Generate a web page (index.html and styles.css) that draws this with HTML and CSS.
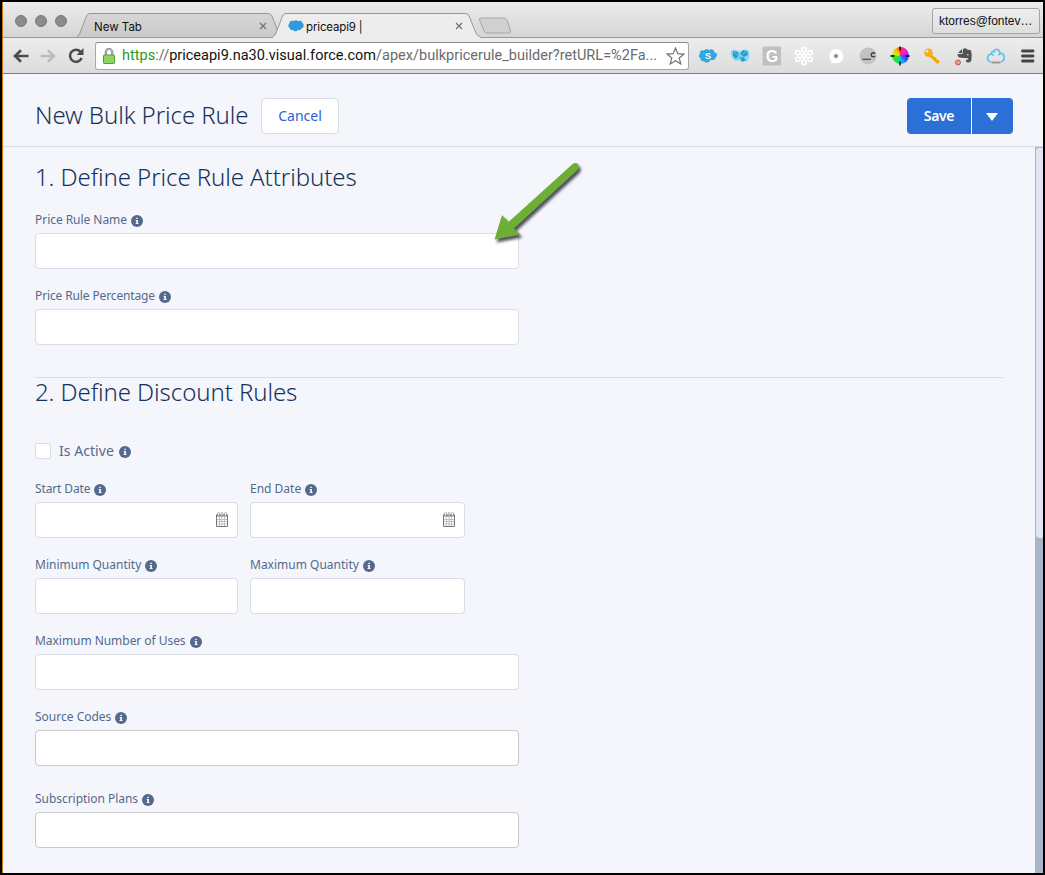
FILE: index.html
```html
<!DOCTYPE html>
<html lang="en">
<head>
<meta charset="utf-8">
<title>priceapi9</title>
<link rel="stylesheet" href="styles.css">
</head>
<body>
<svg class="defs" width="0" height="0">
  <symbol id="info" viewBox="0 0 12 12"><circle cx="6" cy="6" r="6" fill="#54698d"/><path d="M5.300 2.700h1.500v1.400H5.300zM4.700 5h2.200v3.200h.7v.9H4.500v-.9h.8V5.900h-.6z" fill="#fff"/></symbol>
  <symbol id="cal" viewBox="0 0 12 15"><path d="M.5 3.500v11h11v-11" fill="#fff" stroke="#77777c"/><path d="M0 2.500h12v2H0z" fill="#77777c"/><path d="M3.500 5v9M6 5v9M8.500 5v9M1 7.500h10M1 9.500h10M1 12h10" stroke="#b5b5b9" stroke-width=".8"/><path d="M2.500 3.500v-3M6 3.500v-3M9.500 3.500v-3" stroke="#99999d" stroke-width="2.400"/><path d="M2.500 3.500V1M6 3.500V1M9.500 3.500V1" stroke="#fff" stroke-width=".9"/></symbol>
</svg>
<div class="window">
  <div class="tabstrip">
    <div class="lights"><i></i><i></i><i></i></div>
    <div class="tab tab-back">
      <svg class="tab-shape" width="204" height="24" viewBox="0 0 204 24"><defs><linearGradient id="tg" x2="0" y2="1"><stop stop-color="#d6d6d6"/><stop offset="1" stop-color="#cacaca"/></linearGradient></defs><path d="M0 23.500Q2 23 3 20L9.500 3Q10.500.5 13 .5H191Q194 .5 195 3L201.500 20Q202.500 23 204 23.500" fill="url(#tg)" stroke="#979797"/></svg>
      <span class="tab-title">New Tab</span>
      <svg class="tab-x" width="8" height="8"><path d="M1 1l6 6M7 1L1 7" stroke="#737373" stroke-width="1.300"/></svg>
    </div>
    <div class="tab tab-front">
      <svg class="tab-shape" width="210" height="25" viewBox="0 0 210 25"><path d="M0 23.500Q2 23 3 20L9.500 3Q10.500.5 13 .5H192Q195 .5 196 3L203 20Q204 23 207 23.500V25H0z" fill="#ededed"/><path d="M0 23.500Q2 23 3 20L9.500 3Q10.500.5 13 .5H192Q195 .5 196 3L203 20Q204 23 207 23.500" fill="none" stroke="#979797"/></svg>
      <svg class="fav" width="16" height="12" viewBox="0 0 16 12"><path d="M1.200 4C1 1.500 3.500.2 5.500 1.200 6.500-.2 9-.1 9.800 1.200 12-.1 14.500 1 14.500 3 16.500 4.500 16 8 13.500 8.500 12.500 10.500 10.500 10.500 9.800 9.800 9 11.800 6 11.800 5.400 10 3 10.600 1.800 9.500 1.800 8 .2 7.300-.3 5.200 1.200 4z" fill="#2f9bdc"/></svg>
      <span class="tab-title t2">priceapi9 |</span>
      <svg class="tab-x" width="8" height="8"><path d="M1 1l6 6M7 1L1 7" stroke="#737373" stroke-width="1.300"/></svg>
    </div>
    <svg class="newtab" width="34" height="18" viewBox="0 0 34 18"><path d="M3 1H26Q28 1 29 3L32.500 13.500Q33 16 31 16H9Q7 16 6 14L1.500 3Q1 1 3 1z" fill="#d0d0d0" stroke="#a6a6a6"/></svg>
    <div class="user"><span>ktorres@fontev…</span></div>
  </div>
  <div class="toolbar">
    <svg class="nav" width="16" height="14" viewBox="0 0 16 14"><path d="M8 1.200L2 7l6 5.800M2 7h13.500" fill="none" stroke="#4c4c4c" stroke-width="2.600"/></svg>
    <svg class="nav n2" width="16" height="14" viewBox="0 0 16 14"><path d="M8 1.200L14 7l-6 5.800M14 7H.5" fill="none" stroke="#bdbdbd" stroke-width="2.600"/></svg>
    <svg class="nav n3" width="16" height="16" viewBox="0 0 16 16"><path d="M12.500 3.800A6 6 0 1 0 13.600 10" fill="none" stroke="#4c4c4c" stroke-width="2.500"/><path d="M15.500 0v7H8.500z" fill="#4c4c4c"/></svg>
    <div class="omnibox">
      <svg class="lock" width="12" height="16" viewBox="0 0 12 16"><path d="M2.800 7V4.200a3.200 3.200 0 0 1 6.400 0V7" fill="none" stroke="#7d7d7d" stroke-width="2.200"/><path d="M2.800 7V4.200a3.200 3.200 0 0 1 6.400 0V7" fill="none" stroke="#ddd" stroke-width=".7"/><rect x=".5" y="7" width="11" height="8.500" rx=".8" fill="#8fd45f" stroke="#55983a"/></svg>
      <span class="url"><b>https</b>://<em>priceapi9.na30.visual.force.com</em>/apex/bulkpricerule_builder?retURL=%2Fa...</span>
      <svg class="star" width="19" height="18" viewBox="0 0 19 18"><path d="M9.500 1l2.300 5.700 6.100.4-4.700 3.900 1.600 6-5.300-3.300L4.200 17l1.600-6L1.100 7.100l6.100-.4z" fill="#fff" stroke="#747474" stroke-width="1.200"/></svg>
    </div>
    <div class="exts">
      <svg width="20" height="20" viewBox="0 0 20 20"><path d="M2 8C1 5 4 3.500 6 4.500 7.500 2.500 10 3 11 4.200 13 2.500 16 3.500 16.300 6 19 7 20 9 18 11 17.500 14 14 14.500 12.500 14 11 17.500 7 17 6 15 3 16 2 13.500 2.500 12 .2 11 .5 9 2 8z" fill="#33a8e0"/><text x="10" y="13.300" text-anchor="middle" class="skype">S</text></svg>
      <svg width="20" height="20" viewBox="0 0 20 20"><path d="M.5 7Q.5 3.500 5 3.500l5 2 4-2q5.500-.5 5.500 4 .5 6-3.500 8.500l-5-2-4 1Q1.500 14 .5 7z" fill="#8bd8f2"/><path d="M3 5l5 1 1 3-3 4-3-3zM10 8l3-4 4 1 1 4-4 2zM9 11l4 0 3 3-4 2z" fill="#269cca"/><path d="M4 6l8 7M16 5l-8 8" stroke="#64c7e9"/></svg>
      <svg width="20" height="20" viewBox="0 0 20 20"><rect x=".5" y=".5" width="18.500" height="19" rx="1.500" fill="#c0c0c0"/><text x="10" y="16" text-anchor="middle" class="gee">G</text></svg>
      <svg width="20" height="20" viewBox="0 0 20 20"><g fill="#e3e3e3" stroke="#fff" stroke-width="1.800"><path d="M10 10V4M10 10v6M10 10l5.500-3M10 10l-5.500 3M10 10L4.500 7M10 10l5.500 3"/><circle cx="10" cy="3.500" r="2.100"/><circle cx="10" cy="16.500" r="2.100"/><circle cx="4" cy="6.700" r="2.100"/><circle cx="16" cy="6.700" r="2.100"/><circle cx="4" cy="13.300" r="2.100"/><circle cx="16" cy="13.300" r="2.100"/><circle cx="10" cy="10" r="1.700"/></g></svg>
      <svg width="20" height="20" viewBox="0 0 20 20"><path d="M10 3.300a7 7 0 1 1-2 13.500L5 18l.6-2.600A7 7 0 0 1 10 3.300z" fill="#fff"/><circle cx="10" cy="10" r="2.800" fill="#ddd"/><circle cx="10" cy="10" r="1.600" fill="#777"/></svg>
      <svg width="20" height="20" viewBox="0 0 20 20"><circle cx="10" cy="10" r="8.500" fill="#c2c2c2"/><path d="M4.500 13.300H13" stroke="#555" stroke-width="1.400"/><path d="M17.300 7.300q-4-1.500-4 1.500t4 1.300" fill="none" stroke="#444" stroke-width="1.500"/></svg>
      <div class="wheel"><div class="disc"></div><svg width="20" height="20" viewBox="0 0 20 20"><path d="M10 .5v4M10 15.500v4M.5 10h4M15.500 10h4" stroke="#000" stroke-width="1.300"/></svg></div>
      <svg width="20" height="20" viewBox="0 0 20 20"><path d="M7.500 8.500L16.500 17" stroke="#f5a300" stroke-width="2.800"/><path d="M12 14l2-2M14.500 16.800l2.500-2.400" stroke="#f5a300" stroke-width="2"/><circle cx="6.500" cy="6.800" r="4.300" fill="#f9ad16"/><circle cx="5" cy="5.300" r="1.200" fill="#ececec"/></svg>
      <svg width="20" height="20" viewBox="0 0 20 20"><path d="M4 7l4-4v4zM9 3q3-1.500 4 .5 4 .2 4.200 1.500 1 4 .2 9-.6 3-3.800 2.500-2.200-.5-1.600-3l2 .5q1-1.500-1-2L10 12 5 11.500Q3.500 10 3.500 8h5z" fill="#535353"/><circle cx="13.800" cy="8.800" r=".8" fill="#ddd"/><circle cx="4" cy="16.500" r="2.500" fill="#f29a85" stroke="#b65d50"/></svg>
      <svg width="20" height="20" viewBox="0 0 20 20"><path d="M5.500 16.500h9" stroke="#999" stroke-width="2"/><path d="M5 16Q1.500 15.500 1.600 12T5.500 8Q5 5.500 7.500 5.300 8.500 3 11 3.300t3 4Q18 7.500 18.200 11T15 16M5.500 8l2 1.500M14 7.300l-1.500 2M8 5l1 1.500" fill="none" stroke="#5cc4eb" stroke-width="1.700"/></svg>
      <svg width="20" height="20" viewBox="0 0 20 20"><path d="M4.500 5h10.500M4.500 10h10.500M4.500 15h10.500" stroke="#444" stroke-width="2.800" stroke-linecap="round"/></svg>
    </div>
  </div>
  <header class="head">
    <h1>New Bulk Price Rule</h1>
    <button class="cancel">Cancel</button>
    <div class="save-group"><button class="save">Save</button><button class="more"><svg width="12" height="8"><path d="M0 0h12L6 8z" fill="#fff"/></svg></button></div>
  </header>
  <div class="body">
    <main>
      <section class="first">
        <h2>1. Define Price Rule Attributes</h2>
        <div class="field"><label><span class="snug">Price Rule Name</span><svg><use href="#info"/></svg></label><div class="input"></div></div>
        <div class="field"><label><span class="tight">Price Rule Percentage</span><svg><use href="#info"/></svg></label><div class="input"></div></div>
      </section>
      <section class="second">
        <h2>2. Define Discount Rules</h2>
        <div class="check"><i></i><span>Is Active</span><svg><use href="#info"/></svg></div>
        <div class="pair">
          <div class="field"><label><span class="tight">Start Date</span><svg><use href="#info"/></svg></label><div class="input date"><svg><use href="#cal"/></svg></div></div>
          <div class="field"><label><span>End Date</span><svg><use href="#info"/></svg></label><div class="input date"><svg><use href="#cal"/></svg></div></div>
          <div class="field"><label><span>Minimum Quantity</span><svg><use href="#info"/></svg></label><div class="input"></div></div>
          <div class="field"><label><span>Maximum Quantity</span><svg><use href="#info"/></svg></label><div class="input"></div></div>
        </div>
        <div class="field"><label><span class="snug">Maximum Number of Uses</span><svg><use href="#info"/></svg></label><div class="input"></div></div>
        <div class="field gray"><label><span>Source Codes</span><svg><use href="#info"/></svg></label><div class="input"></div></div>
        <div class="field gray plans"><label><span class="snug">Subscription Plans</span><svg><use href="#info"/></svg></label><div class="input"></div></div>
      </section>
    </main>
    <div class="scroll"><div class="thumb"></div></div>
  </div>
</div>
<svg class="arrow" width="110" height="100" viewBox="485 150 110 100"><path d="M494.500 239.500L502 215l6.500 7L571.500 165Q575 161.500 578 164 580 167.500 577 170.500L514 228.500l6.500 6z" fill="#6fae35"/></svg>
</body>
</html>
```
FILE: styles.css
```css
* { box-sizing: border-box; }
body { margin: 0; background: #000; font-family: "Noto Sans", "Open Sans", sans-serif; }
.defs { position: absolute; }
span, h1, h2 { white-space: nowrap; }
svg { display: block; flex: none; }

.window { width: 1045px; height: 875px; border: 2px solid #000; display: flex; flex-direction: column; background: #f4f6fb; box-shadow: inset 1px 0 #c87418; padding-left: 1px; overflow: hidden; border-radius: 2px; }

.tabstrip { height: 36px; flex: none; display: flex; align-items: flex-start; background: linear-gradient(#ececec, #d5d5d5); border-bottom: 1px solid #979797; border-radius: 4px 4px 0 0; position: relative; }
.lights { display: flex; gap: 8px; padding: 13px 0 0 12px; width: 74px; flex: none; }
.lights i { width: 12px; height: 12px; border-radius: 50%; background: #8b8a8f; border: 1px solid #78777b; }
.tab { position: relative; height: 24px; margin-top: 11px; display: flex; align-items: center; flex: none; }
.tab-back { width: 199px; padding-left: 17px; }
.tab-front { width: 202px; padding-left: 12px; z-index: 1; }
.tab-shape { position: absolute; left: 0; top: 0; }
.tab-front .tab-shape { left: -3px; }
.tab-title { position: relative; font: 11.5px/16px Inter, sans-serif; color: #111; margin-top: 3px; }
.t2 { letter-spacing: -.15px; }
.tab-x { position: absolute; top: 9px; left: 182px; }
.tab-front .tab-x { left: 179px; }
.fav { position: relative; margin: 1px 2px 0 0; }
.newtab { margin: 15px 0 0 0; }
.user { position: absolute; right: 3px; top: 6px; width: 108px; height: 26px; border: 1px solid #a3a3a3; border-radius: 3px; background: linear-gradient(#eee, #dedede); font: 12px/25px "Liberation Sans", sans-serif; padding-left: 6px; color: #111; }

.toolbar { height: 36px; flex: none; display: flex; align-items: center; background: linear-gradient(#ededed, #dcdcdc); border-bottom: 1px solid #7d7d7d; padding-left: 10px; }
.n2 { margin-left: 11px; }
.n3 { margin-left: 12px; }
.omnibox { margin-left: 11px; width: 594px; height: 28px; border: 1px solid #a8a8a8; border-top-color: #8f8f8f; border-radius: 3px; background: #fff; display: flex; align-items: center; padding-left: 7px; flex: none; }
.url { font: 14.5px/20px Roboto, sans-serif; letter-spacing: .015px; color: #6b6b6b; margin: 1px 0 0 7px; width: 544px; }
.url b { color: #2b9a1c; font-weight: 400; }
.url em { color: #111; font-style: normal; }
.exts { display: flex; gap: 12px; margin-left: 9px; }
.skype { font: bold 9px "Liberation Sans", sans-serif; fill: #fff; }
.gee { font: bold 16px "Liberation Sans", sans-serif; fill: #fff; }
.wheel { display: grid; place-items: center; width: 20px; height: 20px; }
.wheel > * { grid-area: 1 / 1; }
.disc { width: 17px; height: 17px; border-radius: 50%; background: conic-gradient(#ff3040, #ff20c0 12%, #b020ff 22%, #3050ff 34%, #20a0ff 45%, #10e080 57%, #30e020 68%, #d0f010 80%, #ffb010 91%, #ff3040); }

.head { height: 73px; flex: none; border-bottom: 1px solid #d8dde6; display: flex; align-items: center; padding: 12px 30px 0 32px; }
h1, h2 { margin: 0; font-weight: 300; font-size: 24px; line-height: 32px; color: #16325c; letter-spacing: -.08px; }
h1 { width: 226px; margin-top: -2px; }
button { font: 14px/20px "Noto Sans", sans-serif; height: 36px; padding: 0; border: 0; }
.cancel { width: 78px; background: #fff; border: 1px solid #d8dde6; border-radius: 4px; color: #2a63d6; }
.save-group { margin-left: auto; display: flex; gap: 1px; border-radius: 4px; overflow: hidden; background: #fff; }
.save { width: 64px; background: #2a70d7; color: #fff; font-weight: 600; letter-spacing: -.35px; }
.more { width: 41px; background: #2a70d7; display: grid; place-items: center; padding: 2px 1px 0 0; }

.body { flex: 1; display: flex; min-height: 0; }
main { flex: 1; padding: 14px 0 0 32px; }
.scroll { width: 8px; background: #a9b6ca; padding-left: 1px; }
.thumb { height: 391px; background: #e0e5f1; border-radius: 3px 0 0 4px; border-top: 1px solid #a9b6ca; }
.first { width: 968px; height: 217px; border-bottom: 1px solid #d8dde6; }
.field { width: 484px; height: 76px; }
.first h2 { height: 48px; }
label { display: flex; align-items: center; gap: 4px; height: 20px; padding-top: 2px; margin-bottom: 4px; font-size: 12px; line-height: 18px; color: #54698d; }
label svg, .check svg { width: 12px; height: 12px; margin-top: 1px; }
.snug { letter-spacing: -.045px; }
.tight { letter-spacing: -.13px; }
.input { height: 36px; border: 1px solid #d8dde6; border-radius: 4px; background: #fff; }
.second h2 { height: 63px; margin-top: -2px; }
.check { display: flex; align-items: center; height: 24px; margin-bottom: 15px; color: #54698d; font-size: 14px; }
.check i { width: 16px; height: 16px; border: 1px solid #d8dde6; border-radius: 2px; background: #fff; margin-right: 8px; }
.check span { margin-top: -2px; letter-spacing: .05px; }
.check svg { margin: 1px 0 0 5px; }
.pair { display: grid; grid-template-columns: 203px 215px; column-gap: 12px; }
.pair .field { width: auto; }
.date { display: flex; align-items: center; justify-content: flex-end; padding-right: 9px; }
.date svg { width: 12px; height: 15px; margin-top: -1px; }
.gray .input { border-color: #c9c9c9; }
.plans { margin-top: 6px; }
.arrow { position: absolute; left: 485px; top: 150px; filter: drop-shadow(2px 3px 1.5px rgba(20,20,40,.75)); }
```
